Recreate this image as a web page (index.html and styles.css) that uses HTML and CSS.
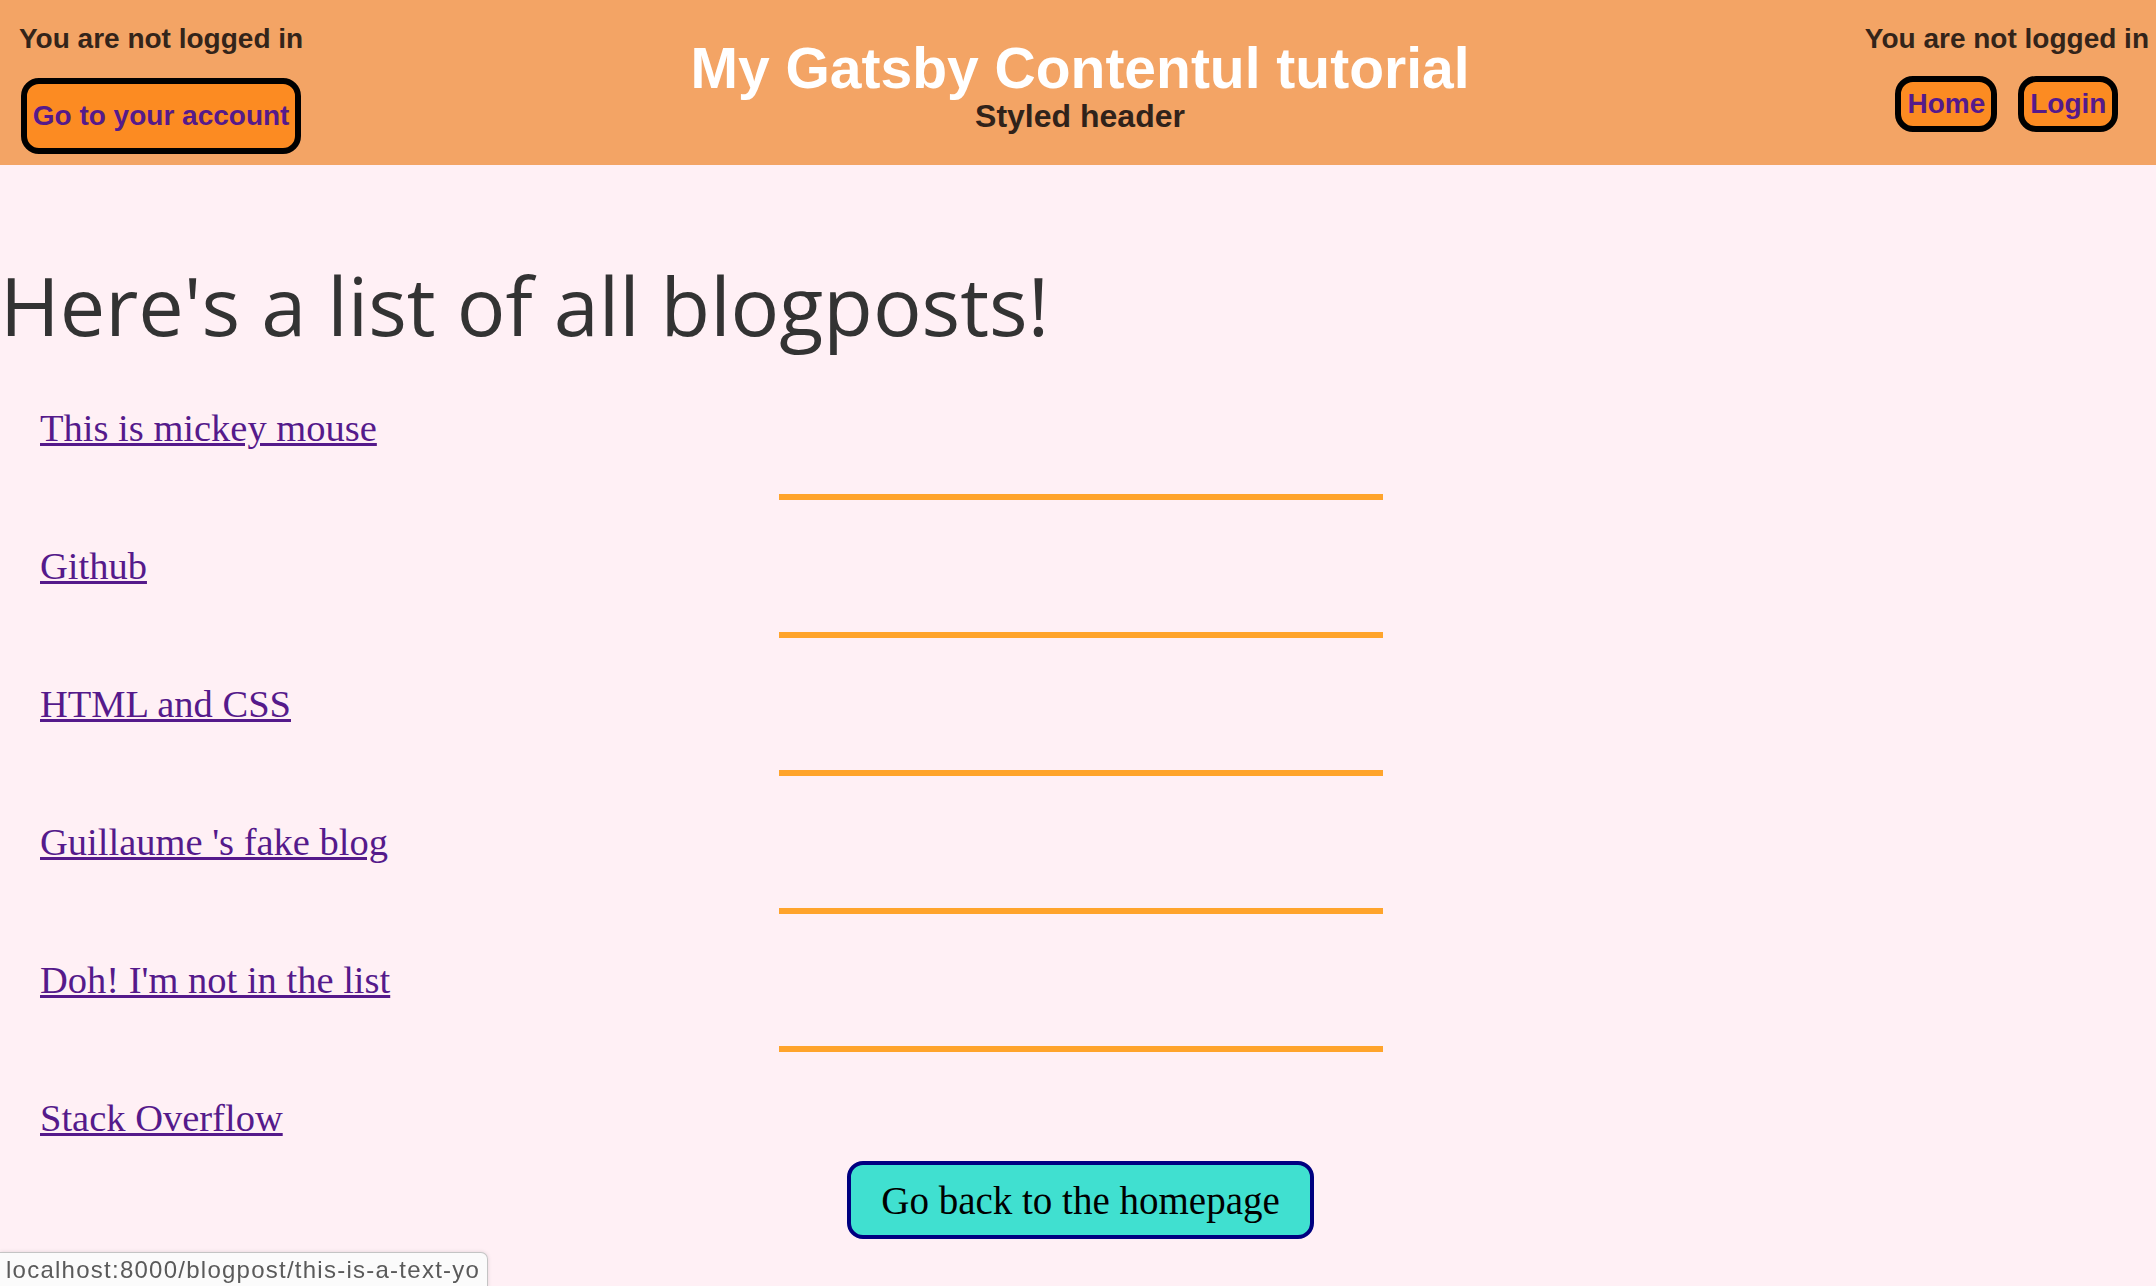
FILE: index.html
```html
<!DOCTYPE html>
<html lang="en">
<head>
<meta charset="utf-8">
<title>My Gatsby Contentul tutorial</title>
<link rel="stylesheet" href="styles.css">
</head>
<body>
  <header class="site-header">
    <div class="side side-left">
      <p class="status">You are not logged in</p>
      <a class="pill pill-big" href="#">Go to your account</a>
    </div>
    <div class="brand">
      <h1 class="brand-title">My Gatsby Contentul tutorial</h1>
      <p class="brand-sub">Styled header</p>
    </div>
    <div class="side side-right">
      <p class="status">You are not logged in</p>
      <nav class="nav">
        <a class="pill" href="#">Home</a>
        <a class="pill" href="#">Login</a>
      </nav>
    </div>
  </header>

  <main class="content">
    <h2 class="page-title">Here's a list of all blogposts!</h2>
    <div class="list-wrap">
      <ul class="posts">
        <li class="post"><a class="post-link" href="#">This is mickey mouse</a></li>
        <li class="sep"><hr class="divider"></li>
        <li class="post"><a class="post-link" href="#">Github</a></li>
        <li class="sep"><hr class="divider"></li>
        <li class="post"><a class="post-link" href="#">HTML and CSS</a></li>
        <li class="sep"><hr class="divider"></li>
        <li class="post"><a class="post-link" href="#">Guillaume 's fake blog</a></li>
        <li class="sep"><hr class="divider"></li>
        <li class="post"><a class="post-link" href="#">Doh! I'm not in the list</a></li>
        <li class="sep"><hr class="divider"></li>
        <li class="post"><a class="post-link" href="#">Stack Overflow</a></li>
      </ul>
      <div class="back">
        <a class="back-btn" href="#">Go back to the homepage</a>
      </div>
    </div>
  </main>

  <div class="statusbar">localhost:8000/blogpost/this-is-a-text-yo</div>
</body>
</html>
```

FILE: styles.css
```css
html, body {
  margin: 0;
  padding: 0;
}

body {
  background: #fff0f5;
  min-height: 1286px;
  font-family: "Liberation Serif", "Times New Roman", serif;
  overflow: hidden;
}

/* ---------- header ---------- */
.site-header {
  display: flex;
  align-items: flex-start;
  height: 165px;
  box-sizing: border-box;
  padding: 0 7px 0 19px;
  background: #f3a465;
  font-family: "Liberation Sans", Arial, Helvetica, sans-serif;
}

.side {
  display: flex;
  flex-direction: column;
  align-items: center;
}

.side-left {
  padding-top: 23px;
}

.side-right {
  padding-top: 23px;
}

.status {
  margin: 0;
  font-size: 28px;
  font-weight: 700;
  line-height: 32px;
  color: #33241a;
  white-space: nowrap;
}

.side-left .status {
  margin-bottom: 23px;
}

.side-right .status {
  margin-bottom: 21px;
}

.pill {
  display: inline-block;
  padding: 6px;
  border: 6px solid #000;
  border-radius: 18px;
  background: #fc8b22;
  color: #551a8b;
  font-size: 28px;
  font-weight: 700;
  line-height: 32px;
  text-decoration: none;
  white-space: nowrap;
}

.pill-big {
  padding: 16px 6px;
}

.nav {
  display: flex;
  gap: 21px;
}

.brand {
  flex: 1;
  text-align: center;
  padding-top: 38px;
  padding-right: 8px;
}

.brand-title {
  margin: 0;
  font-size: 57px;
  font-weight: 700;
  line-height: 60px;
  color: #fff;
}

.brand-sub {
  margin: 0;
  font-size: 32px;
  font-weight: 700;
  line-height: 36px;
  color: #30221a;
}

/* ---------- content ---------- */
.content {
  padding-top: 85px;
}

.page-title {
  margin: 0 0 46px;
  font-family: "Open Sans", "Liberation Sans", sans-serif;
  font-size: 81px;
  font-weight: 400;
  line-height: 109px;
  color: #333;
}

.list-wrap {
  padding-left: 5px;
}

.posts {
  list-style: none;
  margin: 0;
  padding: 0;
}

.post {
  padding-left: 35px;
  font-size: 38.5px;
  line-height: 46px;
}

.post-link {
  color: #551a8b;
  text-decoration: underline;
  text-decoration-thickness: 3px;
  text-underline-offset: 2px;
}

.divider {
  width: 604px;
  height: 6px;
  margin: 43px auto;
  border: 0;
  background: #ffa42b;
}

.back {
  display: flex;
  justify-content: center;
  padding-top: 20px;
}

.back-btn {
  display: inline-block;
  padding: 12.5px 30.5px;
  border: 4px solid #000080;
  border-radius: 16px;
  background: #40e0d0;
  color: #000;
  font-size: 39px;
  line-height: normal;
  text-decoration: none;
}

/* ---------- browser status bubble ---------- */
.statusbar {
  position: fixed;
  left: 0;
  bottom: -2px;
  width: 475px;
  height: 34px;
  padding: 0 6px;
  overflow: hidden;
  white-space: nowrap;
  background: #fbfbfb;
  border: 1px solid #c4c4c4;
  border-left: 0;
  border-top-right-radius: 7px;
  box-shadow: 0 0 4px rgba(0, 0, 0, 0.12);
  font-family: "Liberation Sans", Arial, sans-serif;
  font-size: 24px;
  letter-spacing: 1.25px;
  line-height: 34px;
  color: #5a5a5a;
}
```
